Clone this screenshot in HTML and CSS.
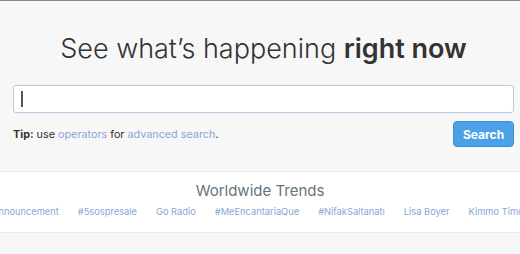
FILE: index.html
```html
<!DOCTYPE html>
<html lang="en">
<head>
    <meta charset="UTF-8">
    <meta name="viewport" content="width=device-width, initial-scale=1.0">
    <title>Twitter Search</title>
    <link rel="stylesheet" href="styles.css">
</head>
<body>
    <div class="search-home">
        <h1 class="headline">See what’s happening <strong>right now</strong></h1>

        <form class="search-form" onsubmit="return false">
            <div class="search-box">
                <input type="text" class="search-input" autocomplete="off">
                <span class="caret"></span>
            </div>
            <div class="search-row">
                <p class="tip"><b>Tip:</b> use <a href="#">operators</a> for <a href="#">advanced search</a>.</p>
                <button type="submit" class="search-button">Search</button>
            </div>
        </form>
    </div>

    <div class="trends">
        <h2>Worldwide Trends</h2>
        <ul class="trend-list">
            <li><a href="#">Announcement</a></li>
            <li><a href="#">#5sospresale</a></li>
            <li><a href="#">Go Radio</a></li>
            <li><a href="#">#MeEncantariaQue</a></li>
            <li><a href="#">#NifakSaltanatı</a></li>
            <li><a href="#">Lisa Boyer</a></li>
            <li><a href="#">Kimmo Timonen</a></li>
        </ul>
    </div>
</body>
</html>
```

FILE: styles.css
```css
* {
    margin: 0;
    padding: 0;
    box-sizing: border-box;
}

body {
    font-family: Inter, Lato, sans-serif;
    background-color: #f7f7f7;
    border-top: 1px solid #8c8c74;
    color: #333;
    overflow: hidden;
}

a {
    text-decoration: none;
}

.search-home {
    padding: 28px 6px 0 13px;
}

.headline {
    text-align: center;
    font-size: 27px;
    font-weight: 300;
    line-height: 40px;
    color: #333;
}

.headline strong {
    font-weight: 600;
}

.search-form {
    margin-top: 16px;
}

.search-box {
    position: relative;
}

.search-input {
    display: block;
    width: 100%;
    height: 28px;
    border: 1px solid #b8cbe2;
    border-radius: 3px;
    background-color: #fff;
    outline: none;
}

.caret {
    position: absolute;
    left: 8px;
    top: 6px;
    width: 2px;
    height: 16px;
    background-color: #555;
}

.search-row {
    display: flex;
    justify-content: space-between;
    align-items: flex-start;
    margin-top: 8px;
}

.tip {
    font-size: 10.8px;
    margin-top: 7px;
    color: #333;
}

.tip a {
    color: #8aa6d4;
}

.search-button {
    width: 61px;
    height: 26px;
    background-color: #4aa1e8;
    border: 1px solid #3b8fd6;
    border-radius: 4px;
    color: #fff;
    font-family: inherit;
    font-size: 12px;
    font-weight: 700;
    cursor: pointer;
}

.trends {
    margin-top: 24px;
    background-color: #fff;
    border-top: 1px solid #e6e8ec;
    border-bottom: 1px solid #e6e8ec;
    padding: 8px 0 13px;
    text-align: center;
}

.trends h2 {
    font-size: 15px;
    font-weight: 400;
    color: #66757f;
    line-height: 22px;
}

.trend-list {
    list-style-type: none;
    display: flex;
    gap: 19px;
    margin-left: -8px;
    margin-top: 3px;
    font-size: 9.3px;
    line-height: 14px;
    white-space: nowrap;
}

.trend-list a {
    color: #8aa6d4;
}
```
